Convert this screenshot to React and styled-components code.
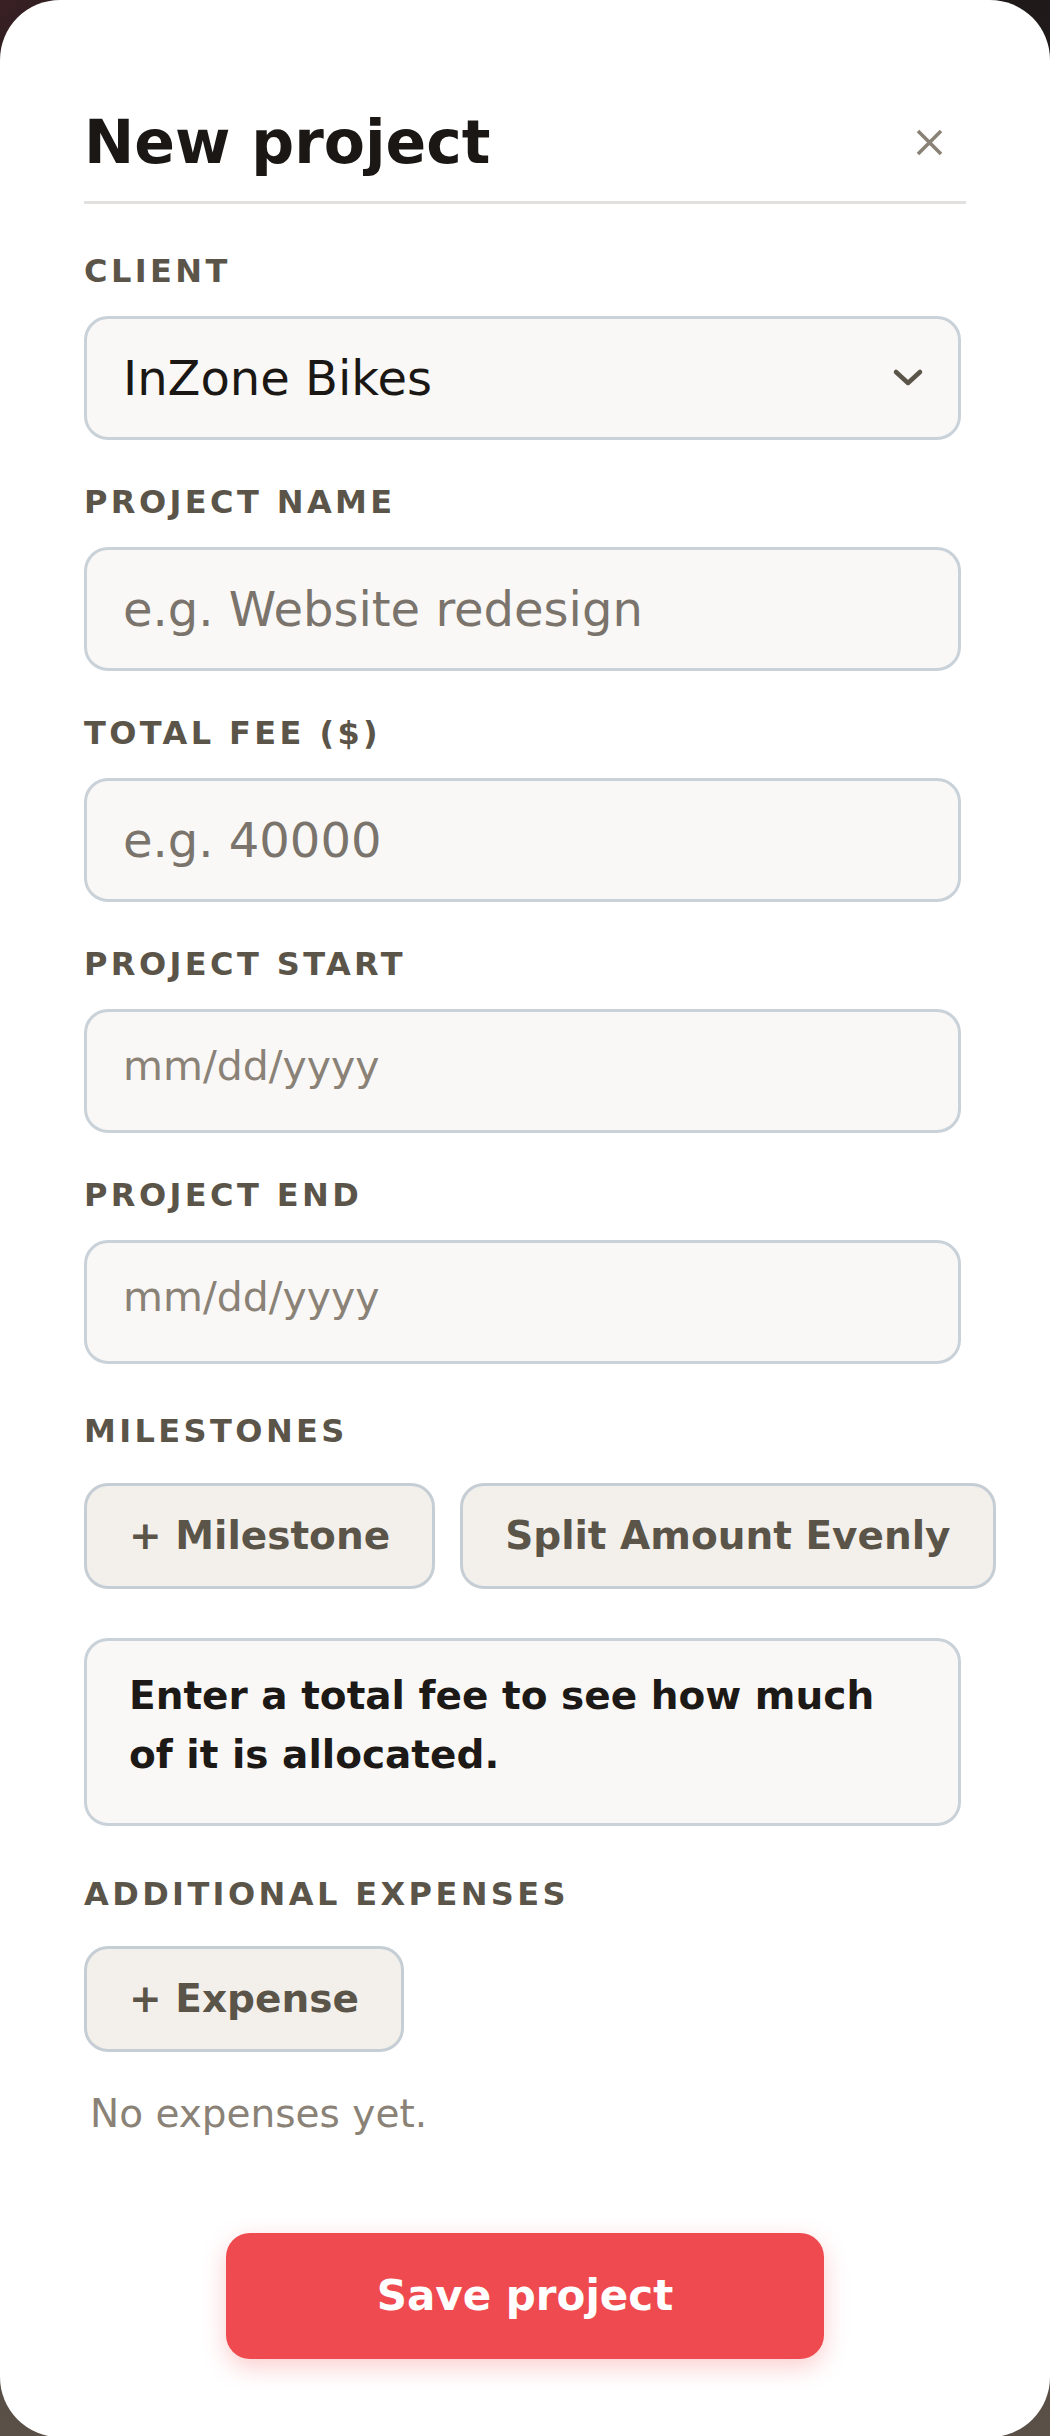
import React from 'react';
import styled, { createGlobalStyle } from 'styled-components';

const GlobalStyle = createGlobalStyle`
    html, body {
        margin: 0;
        padding: 0;
    }

    body {
        font-family: "DejaVu Sans", "Noto Sans", sans-serif;
        background:
            radial-gradient(circle at 0 0, #3a2024 0, transparent 140px),
            linear-gradient(180deg, #1f1a19 0%, #2e2623 50%, #5a5047 100%);
    }
`;

const Sheet = styled.div`
    box-sizing: border-box;
    width: 1050px;
    min-height: 100vh;
    padding: 0 84px 78px;
    background: #fff;
    border-radius: 60px;
`;

const Header = styled.header`
    display: flex;
    align-items: center;
    justify-content: space-between;
    padding: 106px 0 23px;
    border-bottom: 3px solid #e2e1df;
`;

const Title = styled.h1`
    margin: 0;
    font-size: 60px;
    line-height: 72px;
    font-weight: 700;
    color: #1a1715;
`;

const CloseButton = styled.button`
    display: flex;
    align-items: center;
    justify-content: center;
    width: 40px;
    height: 40px;
    margin-right: 17px;
    padding: 0;
    border: none;
    background: none;
    color: #8a8276;
    cursor: pointer;
`;

const Form = styled.form`
    display: flex;
    flex-direction: column;
    padding: 48px 5px 0 0;
`;

const Field = styled.div`
    display: flex;
    flex-direction: column;
    margin-bottom: ${p => p.$last ? '48px' : '43px'};
`;

const Label = styled.label`
    display: block;
    margin-bottom: ${p => p.$section ? '33px' : '26px'};
    font-size: 32px;
    line-height: 38px;
    font-weight: 700;
    letter-spacing: 3.4px;
    text-transform: uppercase;
    color: #5b5449;
`;

const inputBase = `
    box-sizing: border-box;
    width: 100%;
    height: 124px;
    padding: 0 36px;
    border: 3px solid #c9d1d9;
    border-radius: 24px;
    background: #f9f8f6;
    font-family: "DejaVu Sans", sans-serif;
    color: #1a1715;
    outline: none;
`;

const Input = styled.input`
    ${inputBase}
    font-size: ${p => p.$date ? '41px' : '48px'};
    padding-bottom: ${p => p.$date ? '10px' : '0'};

    &::placeholder {
        color: ${p => p.$date ? '#8a8276' : '#7a746c'};
        opacity: 1;
    }
`;

const SelectWrap = styled.div`
    position: relative;
`;

const Select = styled.select`
    ${inputBase}
    font-size: 48px;
    appearance: none;
    -webkit-appearance: none;
`;

const Chevron = styled.svg`
    position: absolute;
    top: 50%;
    right: 37px;
    width: 32px;
    height: 20px;
    transform: translateY(-50%);
    pointer-events: none;
`;

const ButtonRow = styled.div`
    display: flex;
    gap: 25px;
    margin-bottom: 49px;
`;

const GhostButton = styled.button`
    flex-shrink: 0;
    align-self: flex-start;
    box-sizing: border-box;
    height: 106px;
    padding: 0 42px 2px;
    border: 3px solid #c6ced5;
    border-radius: 24px;
    background: #f3f0ec;
    font-family: "DejaVu Sans", sans-serif;
    font-size: 39px;
    font-weight: 700;
    color: #5a5449;
    white-space: nowrap;
    cursor: pointer;
`;

const Notice = styled.div`
    box-sizing: border-box;
    padding: 26px 42px 39px;
    margin-bottom: 49px;
    border: 3px solid #c9d1d9;
    border-radius: 24px;
    background: #f9f8f6;
    font-size: 39px;
    line-height: 58.5px;
    font-weight: 700;
    color: #1c1917;
`;

const Empty = styled.p`
    margin: 33px 0 0;
    padding-left: 6px;
    font-size: 39px;
    line-height: 58.5px;
    color: #8a8276;
`;

const Footer = styled.div`
    display: flex;
    justify-content: center;
    margin-right: -5px;
    padding-top: 89px;
`;

const SaveButton = styled.button`
    width: 598px;
    height: 126px;
    border: none;
    border-radius: 24px;
    background: #ef4a4f;
    box-shadow: 0 8px 24px rgba(239, 74, 79, 0.28);
    font-family: "DejaVu Sans", sans-serif;
    font-size: 42px;
    font-weight: 700;
    color: #fff;
    cursor: pointer;
`;

const fields = [
    { id: 'name', label: 'Project name', placeholder: 'e.g. Website redesign' },
    { id: 'fee', label: 'Total fee ($)', placeholder: 'e.g. 40000' },
    { id: 'start', label: 'Project start', placeholder: 'mm/dd/yyyy', date: true },
    { id: 'end', label: 'Project end', placeholder: 'mm/dd/yyyy', date: true },
];

export default function App() {
    return (
        <>
            <GlobalStyle />
            <Sheet>
                <Header>
                    <Title>New project</Title>
                    <CloseButton type="button" aria-label="Close">
                        <svg width="27" height="27" viewBox="0 0 27 27">
                            <path d="M2 2 L25 25 M25 2 L2 25" stroke="currentColor" strokeWidth="3.6" />
                        </svg>
                    </CloseButton>
                </Header>

                <Form onSubmit={e => e.preventDefault()}>
                    <Field>
                        <Label htmlFor="client">Client</Label>
                        <SelectWrap>
                            <Select id="client" defaultValue="inzone">
                                <option value="inzone">InZone Bikes</option>
                            </Select>
                            <Chevron viewBox="0 0 32 20">
                                <polyline points="4,4 16,15 28,4" fill="none" stroke="#5a5449" strokeWidth="4.5" strokeLinecap="round" strokeLinejoin="round" />
                            </Chevron>
                        </SelectWrap>
                    </Field>

                    {fields.map((f, i) => (
                        <Field key={f.id} $last={i === fields.length - 1}>
                            <Label htmlFor={f.id}>{f.label}</Label>
                            <Input id={f.id} type="text" placeholder={f.placeholder} $date={f.date} />
                        </Field>
                    ))}

                    <Label $section>Milestones</Label>
                    <ButtonRow>
                        <GhostButton type="button">+ Milestone</GhostButton>
                        <GhostButton type="button">Split Amount Evenly</GhostButton>
                    </ButtonRow>

                    <Notice>Enter a total fee to see how much of it is allocated.</Notice>

                    <Label $section>Additional expenses</Label>
                    <GhostButton type="button">+ Expense</GhostButton>
                    <Empty>No expenses yet.</Empty>

                    <Footer>
                        <SaveButton type="submit">Save project</SaveButton>
                    </Footer>
                </Form>
            </Sheet>
        </>
    );
}
